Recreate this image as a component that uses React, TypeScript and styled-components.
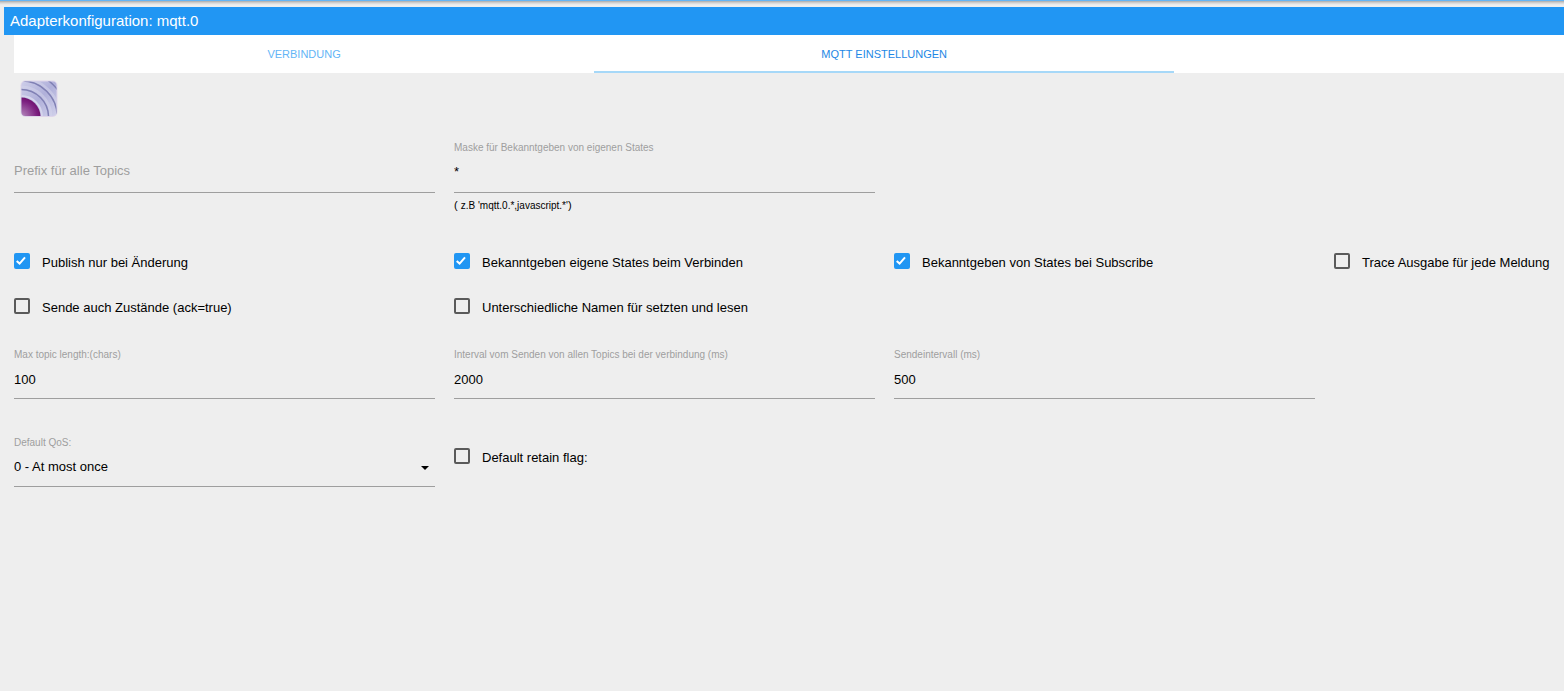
import React from "react";
import styled, { createGlobalStyle } from "styled-components";

const GlobalStyle = createGlobalStyle`
  *, *::before, *::after { box-sizing: border-box; }
  body {
    margin: 0;
    background: #eee;
    color: #000;
    font-family: "Liberation Sans", Arial, sans-serif;
    font-size: 13px;
    line-height: 18px;
  }
`;

const TopStrip = styled.div`
  height: 7px;
  background: linear-gradient(#64b5f6 0 1px, #a8a8a8 1px, #c4c4c4 2px, #e4e4e4 4px, #eee 5px);
`;

const Title = styled.h1`
  margin: 0 0 0 4px;
  padding: 0 6px;
  background: #2196f3;
  color: #fff;
  font-size: 15px;
  font-weight: 400;
  line-height: 28px;
`;

const Main = styled.main`
  padding-left: 14px;
`;

const Tabs = styled.nav`
  display: flex;
  height: 38px;
  padding-right: 3px;
  background: #fff;
`;

const Tab = styled.button<{ $active?: boolean }>`
  width: 37.5%;
  padding: 2px 0 0;
  border: 0;
  border-bottom: 2px solid ${(p) => (p.$active ? "#a6d8f8" : "transparent")};
  background: none;
  color: ${(p) => (p.$active ? "#1e88e5" : "#64b5f6")};
  font: inherit;
  font-size: 11px;
  text-transform: uppercase;
  cursor: pointer;
`;

const Logo = styled.svg`
  display: block;
  width: 38px;
  height: 38px;
  margin: 7px 6px 0;
`;

const Form = styled.form`
  padding-top: 24px;
`;

const Row = styled.div<{ $height: number }>`
  display: grid;
  grid-template-columns: repeat(3, minmax(0, 421fr)) minmax(0, 230fr);
  column-gap: 19px;
  align-items: start;
  min-height: ${(p) => p.$height}px;
`;

const FieldBox = styled.div<{ $empty?: boolean }>`
  position: relative;
  display: flex;
  flex-direction: column;
  padding-top: ${(p) => (p.$empty ? 12 : 0)}px;
`;

const FieldLabel = styled.label`
  height: 12px;
  color: #9e9e9e;
  font-size: 10px;
  line-height: 12px;
  white-space: nowrap;
`;

/* An empty field shows its label at full size, over the input. */
const RestingLabel = styled.label`
  position: absolute;
  left: 0;
  bottom: 13px;
  color: #9e9e9e;
  cursor: text;
`;

const TextInput = styled.input`
  width: 100%;
  height: 39px;
  padding: 0 0 4px;
  border: 0;
  border-bottom: 1px solid #9e9e9e;
  border-radius: 0;
  outline: none;
  background: transparent;
  color: #000;
  font: inherit;
`;

const NumberInput = styled(TextInput)`
  height: 38px;
  padding: 0;
`;

const SelectWrap = styled.div`
  position: relative;
`;

const Select = styled.select`
  display: block;
  width: 100%;
  height: 38px;
  padding: 0 0 2px;
  border: 0;
  border-bottom: 1px solid #9e9e9e;
  border-radius: 0;
  outline: none;
  appearance: none;
  background: transparent;
  color: #000;
  font: inherit;
`;

const Caret = styled.svg`
  position: absolute;
  right: 6px;
  top: 17px;
  width: 8px;
  height: 4px;
  pointer-events: none;
`;

const Hint = styled.div`
  padding-top: 3px;
  font-size: 11px;
  small { font-size: 10px; }
`;

const CheckLabel = styled.label`
  display: flex;
  gap: 12px;
  white-space: nowrap;
  cursor: pointer;
`;

const CheckText = styled.span`
  padding-top: 1px;
`;

const CheckWrap = styled.span`
  display: grid;
  width: 16px;
  height: 16px;
  > * { grid-area: 1 / 1; }
`;

const CheckInput = styled.input`
  width: 16px;
  height: 16px;
  margin: 0;
  border: 2px solid #5a5a5a;
  border-radius: 2px;
  appearance: none;
  &:checked { border-color: #2196f3; background: #2196f3; }
  & + svg { visibility: hidden; pointer-events: none; }
  &:checked + svg { visibility: visible; }
`;

const RetainCell = styled.div`
  padding-top: 11px;
`;

function Check({ label, checked }: { label: string; checked?: boolean }) {
  return (
    <CheckLabel>
      <CheckWrap>
        <CheckInput type="checkbox" defaultChecked={checked} />
        <svg viewBox="0 0 16 16" width="16" height="16" aria-hidden="true">
          <path d="M2.7 8 L5.6 10.6 L11 4.4" fill="none" stroke="#fff" strokeWidth="2" />
        </svg>
      </CheckWrap>
      <CheckText>{label}</CheckText>
    </CheckLabel>
  );
}

function NumberField({ id, label, value }: { id: string; label: string; value: string }) {
  return (
    <FieldBox>
      <FieldLabel htmlFor={id}>{label}</FieldLabel>
      <NumberInput id={id} inputMode="numeric" defaultValue={value} />
    </FieldBox>
  );
}

function MqttLogo() {
  return (
    <Logo viewBox="0 0 38 38" role="img" aria-label="MQTT">
      <defs>
        <linearGradient id="sky" x1="0" y1="0" x2="1" y2="1">
          <stop offset="0" stopColor="#d0d0ea" />
          <stop offset="0.5" stopColor="#b0b0da" />
          <stop offset="1" stopColor="#d4d4ec" />
        </linearGradient>
        <radialGradient id="core" gradientUnits="userSpaceOnUse" cx="1" cy="37" r="20">
          <stop offset="0" stopColor="#b88fc0" />
          <stop offset="0.8" stopColor="#7c2080" />
          <stop offset="1" stopColor="#6e0f6c" />
        </radialGradient>
        <clipPath id="tile"><rect x="1.5" y="1.5" width="35" height="34.5" rx="4" /></clipPath>
      </defs>
      <rect x="0.5" y="0.5" width="37" height="36.5" rx="5" fill="#dfd5ea" />
      <g clipPath="url(#tile)">
        <rect width="38" height="38" fill="url(#sky)" />
        <g fill="none">
          <circle cx="1" cy="37" r="38.5" stroke="#d5d5ec" strokeOpacity="0.5" strokeWidth="3" />
          <circle cx="1" cy="37" r="30" stroke="#d5d5ec" strokeOpacity="0.5" strokeWidth="3" />
          <circle cx="1" cy="37" r="21" stroke="#d5d5ec" strokeWidth="2" />
          <circle cx="1" cy="37" r="45.5" stroke="#8080b4" strokeWidth="1.5" />
          <circle cx="1" cy="37" r="36.3" stroke="#8080b4" strokeWidth="1.5" />
          <circle cx="1" cy="37" r="27.5" stroke="#8080b4" strokeWidth="1.5" />
        </g>
        <circle cx="1" cy="37" r="19.5" fill="url(#core)" />
      </g>
    </Logo>
  );
}

export default function App() {
  return (
    <>
      <GlobalStyle />
      <TopStrip />
      <Title>Adapterkonfiguration: mqtt.0</Title>
      <Main>
        <Tabs>
          <Tab type="button">Verbindung</Tab>
          <Tab type="button" $active>MQTT Einstellungen</Tab>
        </Tabs>
        <MqttLogo />
        <Form>
          <Row $height={111}>
            <FieldBox $empty>
              <RestingLabel htmlFor="prefix">Prefix für alle Topics</RestingLabel>
              <TextInput id="prefix" />
            </FieldBox>
            <FieldBox>
              <FieldLabel htmlFor="mask">Maske für Bekanntgeben von eigenen States</FieldLabel>
              <TextInput id="mask" defaultValue="*" />
              <Hint>( <small>z.B 'mqtt.0.*,javascript.*'</small>)</Hint>
            </FieldBox>
          </Row>
          <Row $height={45}>
            <Check label="Publish nur bei Änderung" checked />
            <Check label="Bekanntgeben eigene States beim Verbinden" checked />
            <Check label="Bekanntgeben von States bei Subscribe" checked />
            <Check label="Trace Ausgabe für jede Meldung" />
          </Row>
          <Row $height={51}>
            <Check label="Sende auch Zustände (ack=true)" />
            <Check label="Unterschiedliche Namen für setzten und lesen" />
          </Row>
          <Row $height={88}>
            <NumberField id="length" label="Max topic length:(chars)" value="100" />
            <NumberField id="connect" label="Interval vom Senden von allen Topics bei der verbindung (ms)" value="2000" />
            <NumberField id="send" label="Sendeintervall (ms)" value="500" />
          </Row>
          <Row $height={50}>
            <FieldBox>
              <FieldLabel htmlFor="qos">Default QoS:</FieldLabel>
              <SelectWrap>
                <Select id="qos" defaultValue="0">
                  <option value="0">0 - At most once</option>
                  <option value="1">1 - At least once</option>
                  <option value="2">2 - Exactly once</option>
                </Select>
                <Caret viewBox="0 0 8 4" aria-hidden="true"><path d="M0 0h8L4 4z" fill="#000" /></Caret>
              </SelectWrap>
            </FieldBox>
            <RetainCell>
              <Check label="Default retain flag:" />
            </RetainCell>
          </Row>
        </Form>
      </Main>
    </>
  );
}
